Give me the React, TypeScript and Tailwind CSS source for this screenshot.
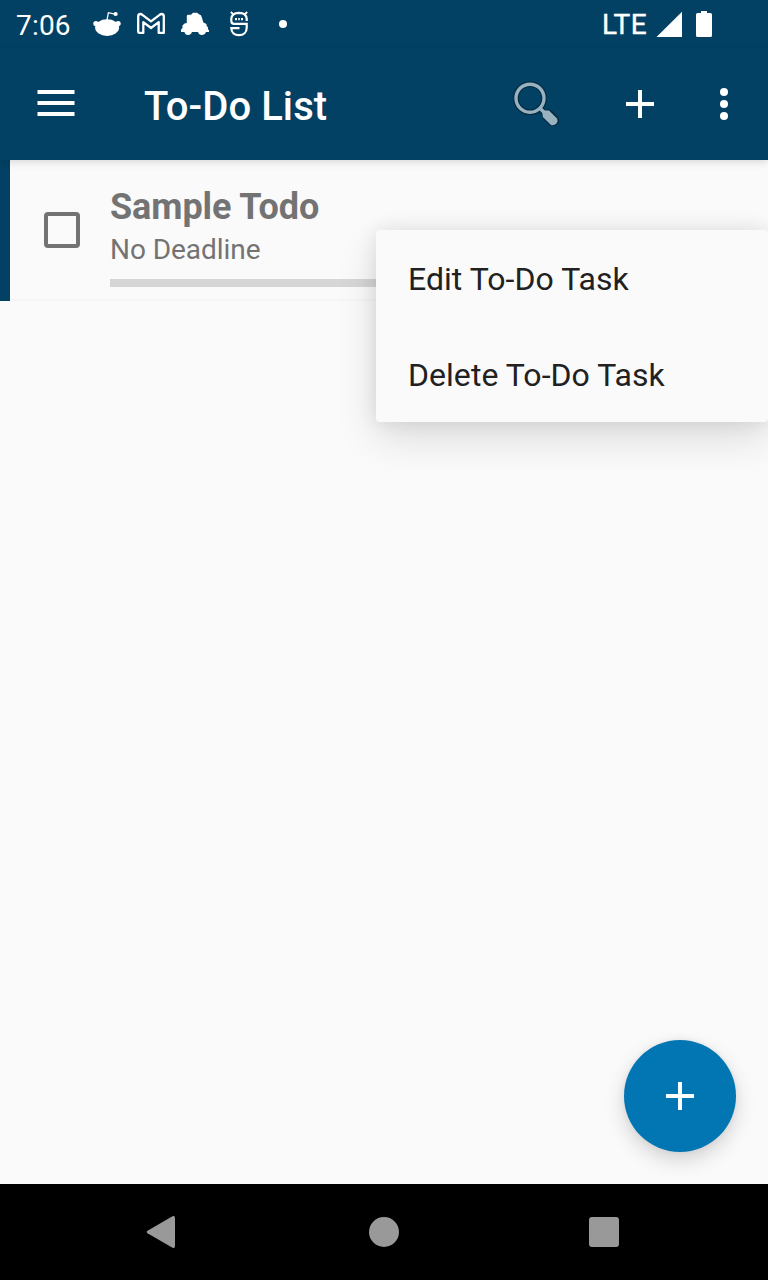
import React from 'react';

function RedditIcon() {
  return (
    <svg width="28" height="28" viewBox="93 10 28 28" fill="white">
      <ellipse cx="107.100" cy="27.600" rx="12" ry="8.300" />
      <circle cx="95.900" cy="23.600" r="2.600" />
      <circle cx="118.100" cy="23.600" r="2.600" />
      <path d="M107 20L108.400 12.700L115 14.200" fill="none" stroke="white" strokeWidth="1.300" />
      <circle cx="115.600" cy="14" r="2.100" />
    </svg>
  );
}

function MailIcon() {
  return (
    <svg width="28" height="28" viewBox="137 10 28 28" fill="none" stroke="white" strokeWidth="2.300" strokeLinejoin="round">
      <path d="M138.200 16.400Q138.200 14 140.400 14Q141.400 14 142.400 14.900L151 21.400L159.600 14.900Q160.600 14 161.600 14Q163.800 14 163.800 16.400V32.900H158.700V22.200L151 28L143.300 22.200V32.900H139.400Q138.200 32.900 138.200 31.700Z" />
    </svg>
  );
}

function CarIcon() {
  return (
    <svg width="28" height="28" viewBox="181 10 28 28" fill="white">
      <path d="M186.800 23V16Q186.800 14.700 188.500 14.700H191L193 12.800H197L199.500 14.600Q201.200 15 201.700 17L203.400 22.500L206.500 24V25.500L208 27.500V29.500L209 30V32H206Q205 35 201.800 35Q198.800 35 198 32H192Q191 35 188 35Q185 35 184.500 32H181V29.500L182.500 28V25.500L184.500 23.500Z" />
    </svg>
  );
}

function MascotIcon() {
  return (
    <svg width="28" height="28" viewBox="225 10 28 28" fill="none" stroke="white" strokeWidth="2.200">
      <path d="M230.800 12L234 15M247.200 12L244 15" strokeWidth="1.800" />
      <path d="M246.700 21V18.800Q246.300 12.900 239 12.800Q231.700 12.900 231.300 18.800V21Q231.300 23.900 234.200 23.900H246.700V27.800C246.700 32.600 243.500 35.200 239 35.200C234.500 35.200 231.300 32.600 231.300 28.100H239.500" />
      <path d="M235 19.100h2M238.200 19.100h1.600M241 19.100h2" />
    </svg>
  );
}

function StatusBar() {
  return (
    <div className="relative z-10 flex h-12 items-center bg-[#024163] pl-4 text-[28px] leading-[32px] text-white">
      <span className="w-[77px] pt-[3px] tracking-[0.200px]">7:06</span>
      <div className="flex gap-4">
        <RedditIcon />
        <MailIcon />
        <CarIcon />
        <MascotIcon />
      </div>
      <span className="ml-[26px] h-2 w-2 rounded-full bg-white" />
      <span className="ml-auto w-[54px] pt-[1px] tracking-[0.300px] [-webkit-text-stroke:0.400px_white]">LTE</span>
      <svg className="mr-[54px]" width="58" height="28" viewBox="656 10 58 28" fill="white">
        <path d="M656.500 37L682 11.700V37Z" />
        <path d="M701 11h6v2h3.500q1.500 0 1.500 1.500v21q0 1.500 -1.500 1.500h-13q-1.500 0 -1.500 -1.500v-21q0 -1.500 1.500 -1.500h3.500z" />
      </svg>
    </div>
  );
}

function PlusIcon() {
  return (
    <svg width="28" height="28" viewBox="0 0 28 28" fill="white">
      <path d="M12 0h4v12h12v4H16v12h-4V16H0v-4h12z" />
    </svg>
  );
}

function SearchIcon() {
  return (
    <svg width="52" height="52" viewBox="508 78 52 52" fill="none">
      <g stroke="#032c43" strokeLinecap="round">
        <circle cx="530" cy="98.200" r="14" strokeWidth="5.800" />
        <path d="M540 108.500L545 113.500" strokeWidth="6" />
        <path d="M548 115.300L553 120.300" strokeWidth="12" />
      </g>
      <g stroke="#9ab2c0">
        <circle cx="530" cy="98.200" r="14" strokeWidth="3.400" />
        <path d="M540 108.300L545 113.300" strokeWidth="3.500" />
      </g>
      <path d="M543.500 110.500L549 110.500L557 118.500Q558.500 121 556.500 123.500Q554 126 551 125L542.800 117L542.300 112Z" fill="#9ab2c0" />
    </svg>
  );
}

function Toolbar() {
  return (
    <header className="relative z-10 flex h-28 items-center bg-[#024163] text-white shadow-[0_2px_8px_rgba(0,0,0,0.140)]">
      <svg className="mb-[2px] ml-[37px]" width="38" height="28" viewBox="0 0 38 28" fill="white">
        <path d="M.5 1h37v4h-37zM.5 12h37v4h-37zM.5 23h37v4h-37z" />
      </svg>
      <h1 className="ml-[69px] pt-[5px] text-[40px] leading-[48px] font-medium tracking-[0.080px]">To-Do List</h1>
      <div className="ml-auto flex items-center pr-10">
        <SearchIcon />
        <div className="ml-[66px]"><PlusIcon /></div>
        <svg className="ml-[66px]" width="8" height="32" viewBox="0 0 8 32" fill="white">
          <circle cx="4" cy="4" r="4" />
          <circle cx="4" cy="16" r="4" />
          <circle cx="4" cy="28" r="4" />
        </svg>
      </div>
    </header>
  );
}

function TodoRow() {
  return (
    <div className="flex h-[141px] border-l-[10px] border-[#024163]">
      <div className="flex grow border-b-2 border-[#f5f5f5] pl-[34px] text-[#737373]">
        <div className="mt-[52px] h-9 w-9 shrink-0 rounded-[4px] border-4 border-[#737373]" />
        <div className="ml-[30px] grow pt-[26px]">
          <div className="text-[36px] leading-[42px] font-bold tracking-[-0.080px]">Sample Todo</div>
          <div className="mt-[5px] text-[28px] leading-[33px] tracking-[-0.050px]">No Deadline</div>
          <div className="mt-[13px] h-2 bg-[#d6d6d6]" />
        </div>
      </div>
    </div>
  );
}

function ContextMenu() {
  return (
    <div className="absolute top-[230px] right-0 z-20 w-[392px] rounded-[4px] bg-[#fafafa] text-[32px] leading-[38px] tracking-[0.040px] text-[#212121] shadow-[0_16px_40px_rgba(0,0,0,0.120),0_0_20px_rgba(0,0,0,0.090)]">
      <div className="flex h-24 items-center px-8 pt-[2px]">Edit To-Do Task</div>
      <div className="flex h-24 items-center px-8 pt-[2px]">Delete To-Do Task</div>
    </div>
  );
}

export default function App() {
  return (
    <div className="relative flex h-[1280px] w-[768px] flex-col overflow-hidden bg-[#fafafa] font-['Roboto',sans-serif]">
      <StatusBar />
      <Toolbar />
      <main className="grow">
        <TodoRow />
      </main>
      <ContextMenu />
      <button className="absolute top-[1040px] right-8 flex h-28 w-28 items-center justify-center rounded-full bg-[#0275b3] shadow-[0_8px_20px_rgba(0,0,0,0.160),0_0_6px_rgba(0,0,0,0.060)]">
        <PlusIcon />
      </button>
      <nav className="relative z-10 flex h-24 items-center bg-black">
        <svg className="ml-[146px]" width="30" height="32" viewBox="0 0 30 32" fill="#999">
          <path d="M1.500 14.800L26.500 .300Q29 -.500 29 2V30Q29 32.500 26.500 31.700L1.500 17.200Q0 16 1.500 14.800Z" />
        </svg>
        <span className="ml-[193px] h-[30px] w-[30px] rounded-full bg-[#999]" />
        <span className="ml-[190px] h-[30px] w-[30px] rounded-[3px] bg-[#999]" />
      </nav>
    </div>
  );
}
